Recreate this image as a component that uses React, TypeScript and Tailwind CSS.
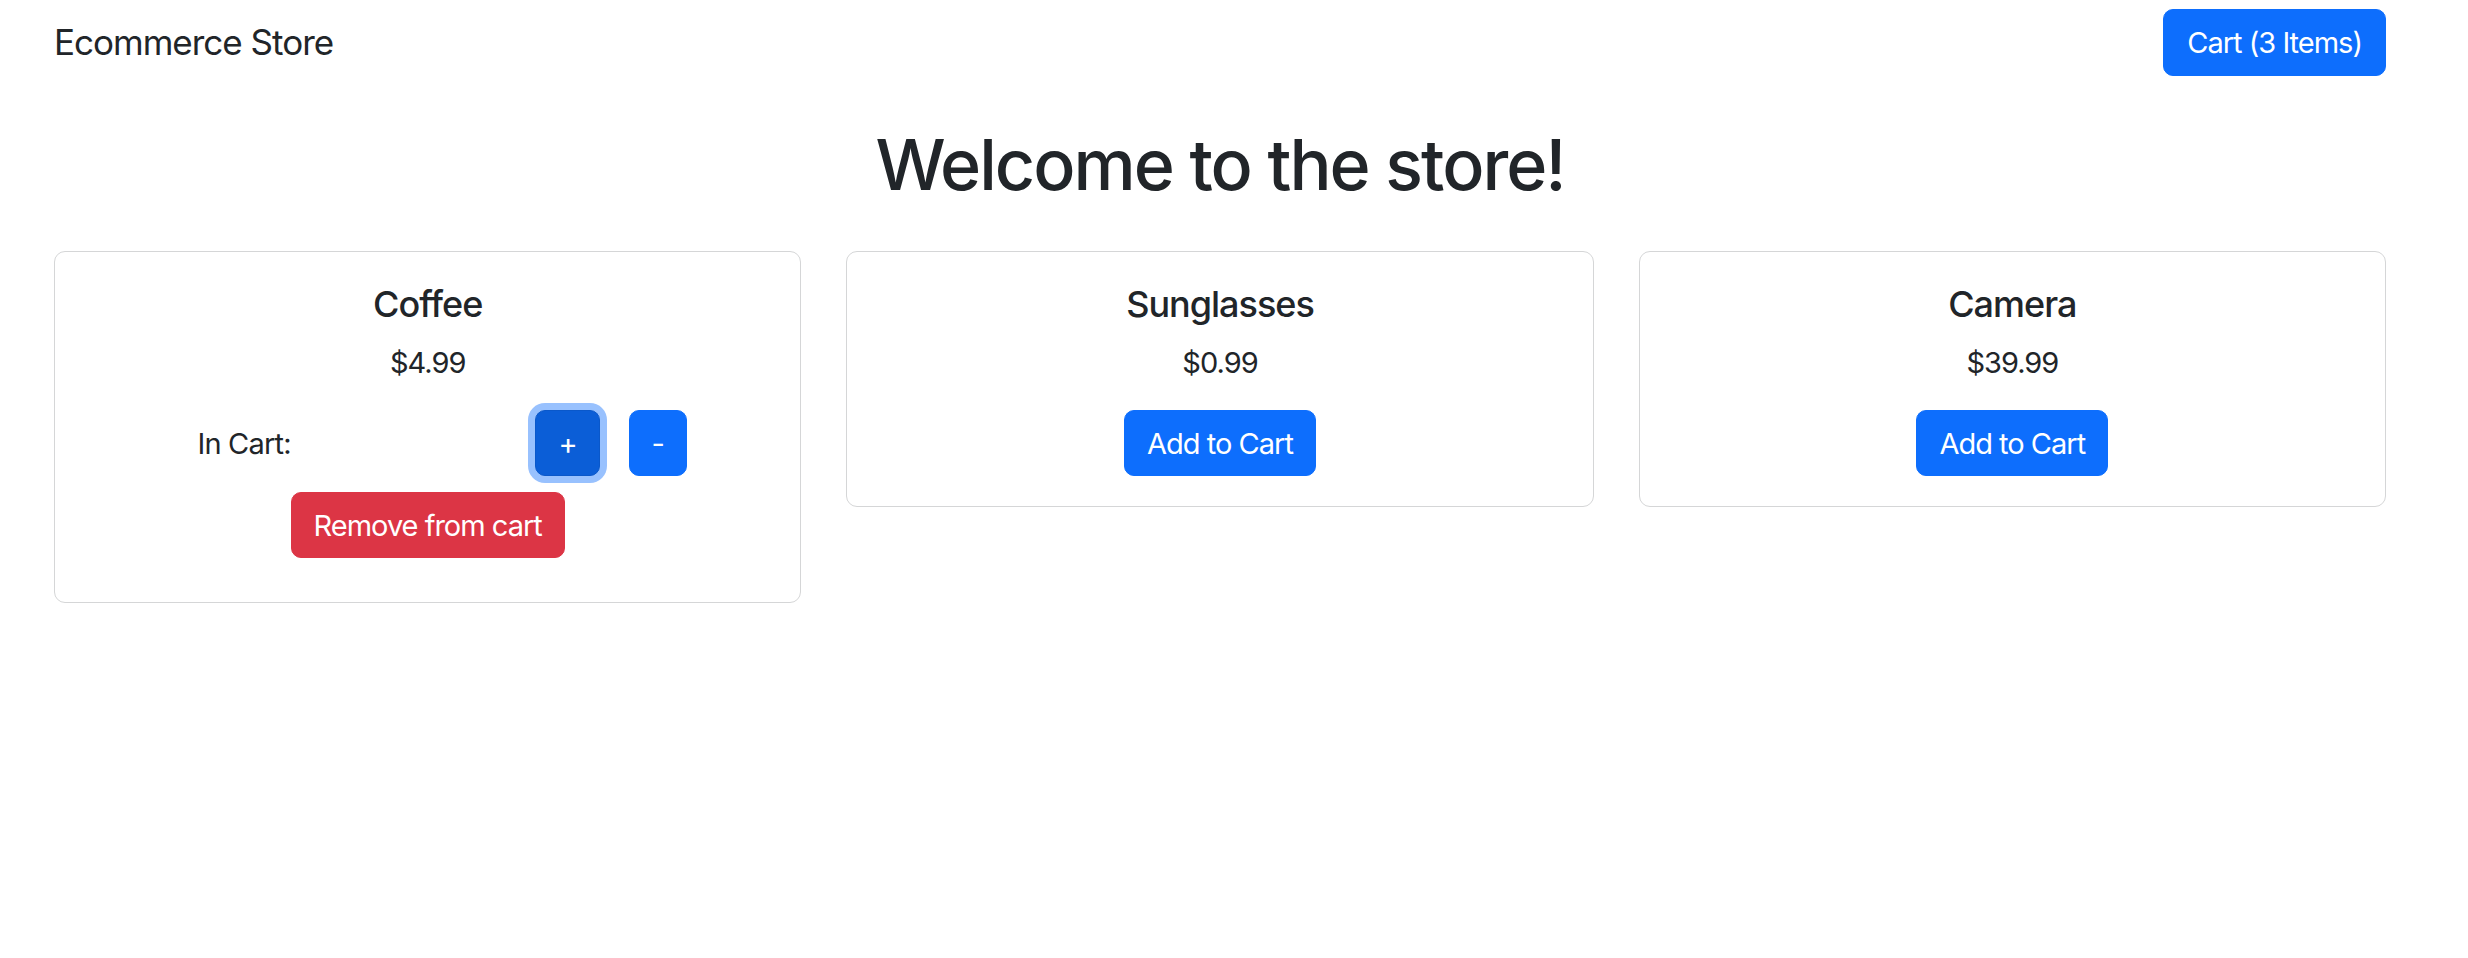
import React from 'react';

type Product = {
  id: number;
  name: string;
  price: string;
  quantity: number;
};

const products: Product[] = [
  { id: 1, name: 'Coffee', price: '$4.99', quantity: 3 },
  { id: 2, name: 'Sunglasses', price: '$0.99', quantity: 0 },
  { id: 3, name: 'Camera', price: '$39.99', quantity: 0 },
];

const btn =
  'inline-flex items-center justify-center h-[66px] px-[22px] rounded-[10px] text-[29px] tracking-[-1px] leading-none text-white border';

const StoreCard: React.FC<{ product: Product }> = ({ product }) => {
  return (
    <div className="border border-[#d5d6d7] rounded-[11px] px-[30px] pt-[30px] pb-[30px] flex flex-col items-center">
      <h5 className="text-[36px] leading-[45px] font-medium tracking-[-1px]">{product.name}</h5>
      <p className="text-[29px] leading-[45px] tracking-[-1px] mt-[13px]">{product.price}</p>

      {product.quantity === 0 ? (
        <button className={`${btn} mt-[25px] bg-[#0d6efd] border-[#0d6efd]`}>Add to Cart</button>
      ) : (
        <div className="flex flex-col items-center mt-[25px] mb-[14px]">
          <div className="flex items-center ml-[29px]">
            <span className="text-[29px] leading-[45px] tracking-[-0.8px] w-[338px]">In Cart:</span>
            <button className={`${btn} bg-[#0b5ed7] border-[#0a58ca] shadow-[0_0_0_7px_rgba(49,132,253,0.5)]`}>
              +
            </button>
            <button className={`${btn} ml-[29px] bg-[#0d6efd] border-[#0d6efd]`}>-</button>
          </div>
          <button className={`${btn} mt-[16px] bg-[#dc3545] border-[#dc3545]`}>Remove from cart</button>
        </div>
      )}
    </div>
  );
};

export default function App() {
  return (
    <div className="min-h-screen bg-white text-[#212529] font-['Inter','Noto_Sans',sans-serif] pl-[54px] pr-[82px]">
      {/* Navbar */}
      <nav className="flex items-center justify-between h-[85px]">
        <span className="text-[35px] leading-[45px] tracking-[-1px]">Ecommerce Store</span>
        <button className={`${btn} px-[23px] h-[67px] bg-[#0d6efd] border-[#0d6efd]`}>Cart (3 Items)</button>
      </nav>

      <h1 className="text-center text-[70px] leading-[86px] font-medium tracking-[-2px] mt-[37px] mb-[43px]">
        Welcome to the store!
      </h1>

      <div className="grid grid-cols-3 gap-[45px] items-start">
        {products.map(product => (
          <StoreCard key={product.id} product={product} />
        ))}
      </div>
    </div>
  );
}
